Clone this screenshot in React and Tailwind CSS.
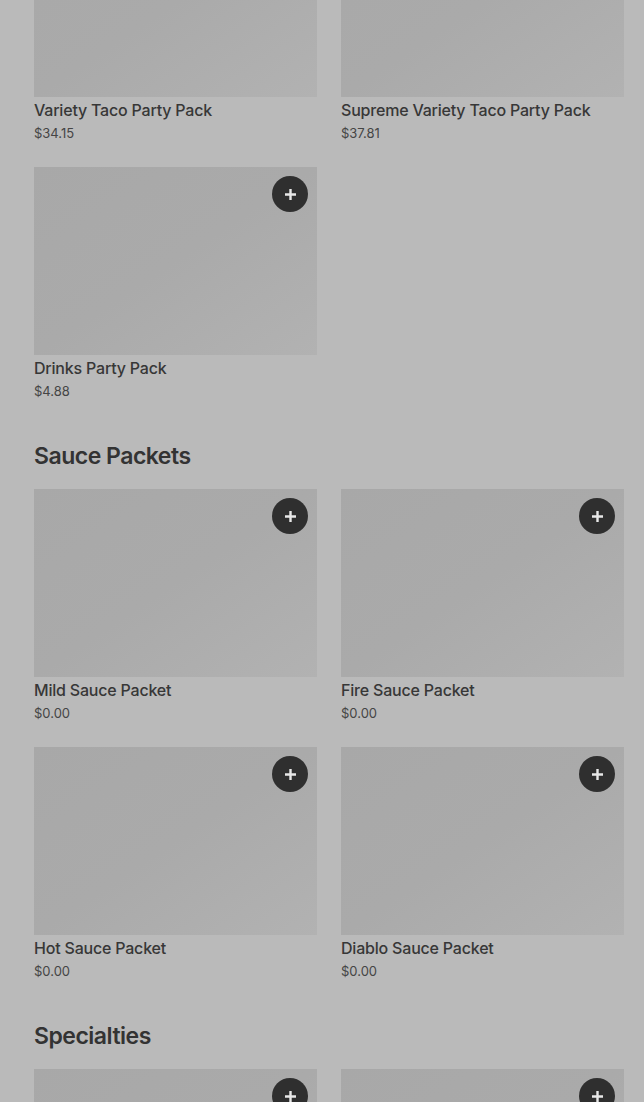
import React from "react";

const Plus = () => (
  <svg width="13" height="13" viewBox="0 0 13 13" fill="none">
    <path d="M6.5 1v11M1 6.5h11" stroke="#e8e8e8" strokeWidth="2.4" />
  </svg>
);

function Card({ name, price }) {
  return (
    <div className="flex flex-col">
      <div className="relative h-[188px] bg-gradient-to-br from-[#a8a8a8] via-[#aaaaaa] to-[#b2b2b2]">
        <div className="absolute right-[9px] top-[9px] flex h-[36px] w-[36px] items-center justify-center rounded-full bg-[#2f2f2f]">
          <Plus />
        </div>
      </div>
      {name && (
        <>
          <div className="mt-[3px] text-[16px] leading-[20px] font-medium tracking-[-0.2px] text-[#373737]">{name}</div>
          <div className="mt-[4px] text-[13px] leading-[18px] text-[#454545]">{price}</div>
        </>
      )}
    </div>
  );
}

function Section({ title, items, first }) {
  return (
    <div className={first ? "" : "mt-[40px]"}>
      {title && (
        <h2 className="mb-[17px] text-[23px] leading-[32px] font-semibold tracking-[-0.5px] text-[#333333]">{title}</h2>
      )}
      <div className="grid grid-cols-2 gap-x-[24px] gap-y-[25px]">
        {items.map((it, i) => (
          <Card key={i} {...it} />
        ))}
      </div>
    </div>
  );
}

export default function App() {
  return (
    <div
      className="h-[1102px] overflow-hidden bg-[#bababa]"
      style={{ fontFamily: "Inter, 'Noto Sans', sans-serif" }}
    >
      <div className="-mt-[91px] pl-[34px] pr-[20px]">
        <Section
          first
          items={[
            { name: "Variety Taco Party Pack", price: "$34.15" },
            { name: "Supreme Variety Taco Party Pack", price: "$37.81" },
            { name: "Drinks Party Pack", price: "$4.88" },
          ]}
        />
        <Section
          title="Sauce Packets"
          items={[
            { name: "Mild Sauce Packet", price: "$0.00" },
            { name: "Fire Sauce Packet", price: "$0.00" },
            { name: "Hot Sauce Packet", price: "$0.00" },
            { name: "Diablo Sauce Packet", price: "$0.00" },
          ]}
        />
        <Section title="Specialties" items={[{}, {}]} />
      </div>
    </div>
  );
}
